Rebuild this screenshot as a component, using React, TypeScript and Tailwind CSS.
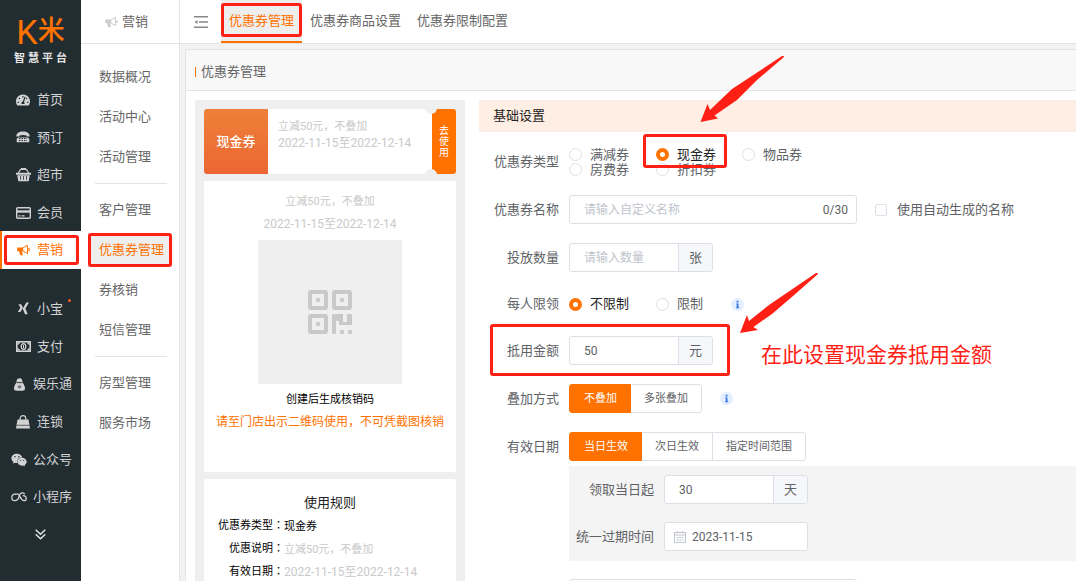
import React, { useState } from "react";
import { FaTachometerAlt, FaWeixin } from "react-icons/fa";

const PhoneIcon = () => (
  <svg width="14" height="12" viewBox="0 0 14 12" fill="currentColor">
    <path d="M.3 5.400C.3 2 3 .4 7 .4s6.700 1.600 6.700 5H10.500V4.600c-2-.7-5-.7-7 0v.8z" />
    <path d="M2.500 6.500h9l1.800 1.200v3.600H.7V7.700z" />
    <path d="M3 7.600h8M3 9.600h8" stroke="#222d32" strokeWidth="1" strokeDasharray="1.500 1" />
  </svg>
);

const BasketIcon = () => (
  <svg width="15" height="14" viewBox="0 0 15 14" fill="currentColor">
    <path d="M2.500 5.500C3 2.400 4.600.8 7.500.8s4.500 1.600 5 4.700" fill="none" stroke="currentColor" strokeWidth="1.200" />
    <path d="M5 0h5v2H5zM0 4.800h15v2H0zM1.300 7.200h12.400l-1 6.100H2.300z" />
    <path d="M4.500 8v3.800M7.500 8v3.800M10.500 8v3.800" stroke="#222d32" strokeWidth="0.800" />
  </svg>
);

const CardIcon = () => (
  <svg width="15" height="12" viewBox="0 0 15 12" fill="none" stroke="currentColor">
    <rect x="0.700" y="0.700" width="13.600" height="10.600" rx="1" strokeWidth="1.400" />
    <path d="M1 4.500h13" strokeWidth="2.400" />
    <path d="M2.500 8.800h2M5.500 8.800h3" strokeWidth="1.200" />
  </svg>
);

const HornIcon = () => (
  <svg width="13" height="12" viewBox="0 0 13 12">
    <path d="M.2 3.500h6v3.800H5l.8 4H3.200L2.200 7.300h-2z" fill="currentColor" />
    <path d="M6 3.800L10.500 1.200v8.400L6 7" fill="none" stroke="currentColor" />
    <path d="M12 4v3" stroke="currentColor" strokeWidth="1.200" />
  </svg>
);

const XiaobaoIcon = () => (
  <svg width="13" height="13" viewBox="0 0 13 13" fill="currentColor">
    <path d="M1.500 2.200h2.600L6 5.800 3.300 10H.8l2.600-4.200z" />
    <path d="M9.300.5H12L8.400 6.600l2.300 5.600H8L5.700 6.700z" />
  </svg>
);

const MoneyIcon = () => (
  <svg width="15" height="11" viewBox="0 0 15 11" fill="none" stroke="currentColor">
    <rect x="0.800" y="0.800" width="13.400" height="9.400" strokeWidth="1.600" />
    <path d="M1.500 3.500L3.500 1.500M13.500 3.500l-2-2M1.500 7.500l2 2M13.500 7.500l-2 2" strokeWidth="1.500" />
    <ellipse cx="7.500" cy="5.500" rx="2.300" ry="2.900" strokeWidth="1.300" />
    <path d="M7.500 3.900v3.200" />
  </svg>
);

const PenguinIcon = () => (
  <svg width="11" height="13" viewBox="0 0 11 13" fill="currentColor">
    <path d="M2.600 3.400C2.600 1.300 3.700.3 5.500.3s2.900 1 2.900 3.100c0 .9.200 1.300.6 1.800C10.300 7 11 8.900 11 10.600c0 1.500-1 2.200-2.500 2.200h-6C1 12.800 0 12.100 0 10.600 0 8.900.7 7 2 5.200c.4-.5.600-.9.600-1.800z" />
    <path d="M2.800 4.600h5.400" stroke="#222d32" strokeWidth="0.900" />
    <path d="M3.800 7.400h3.400v1.400c0 1-.7 1.600-1.700 1.600s-1.700-.6-1.700-1.600z" fill="#6d7679" />
  </svg>
);

const BagIcon = () => (
  <svg width="14" height="14" viewBox="0 0 14 14">
    <path d="M1.500 4.500h11L14 13.500H0z" fill="currentColor" />
    <path d="M4.200 6V3.500C4.200 1.700 5.400.7 7 .7s2.800 1 2.800 2.800V6" fill="none" stroke="currentColor" strokeWidth="1.200" />
    <path d="M.8 10.300h12.400" stroke="#222d32" strokeWidth="0.700" />
  </svg>
);

const MiniProgramIcon = () => (
  <svg width="16" height="10" viewBox="0 0 16 10" fill="none" stroke="currentColor" strokeWidth="1.300" strokeLinecap="round">
    <path d="M4.500 2.200C2 2 .8 3.600.8 5.400c0 2 1.400 3.200 3.200 3.200 2.700 0 3.500-2 4-3.600L8.600 3C9.500.7 12 .3 13.300 1.800" />
    <path d="M5 2.300C6.800 1 8 2.800 9 4.600c1 2 2 4 4 4 1.400 0 2.200-1 2.200-2.200 0-1.500-1.200-2.700-3-2.700" />
  </svg>
);

const DoubleDownIcon = () => (
  <svg width="11" height="11" viewBox="0 0 11 11" fill="none" stroke="currentColor" strokeWidth="1.500">
    <path d="M.7.8l4.800 4.400L10.300.8M.7 5.300l4.800 4.400 4.800-4.400" />
  </svg>
);

const FoldIcon = () => (
  <svg width="14" height="12" viewBox="0 0 14 12" fill="#888">
    <path d="M0 0h14v1.500H0zM5 5.200h9v1.500H5zM0 10.500h14V12H0zM.5 6L3.500 4v4z" />
  </svg>
);

const QrIcon = () => (
  <svg width="44" height="44" viewBox="0 0 44 44" fill="none" stroke="#c9c9c9" strokeWidth="4">
    <rect x="2" y="2" width="16" height="16" rx="1" />
    <rect x="26" y="2" width="16" height="16" rx="1" />
    <rect x="2" y="26" width="16" height="16" rx="1" />
    <g fill="#c9c9c9" stroke="none">
      <circle cx="10" cy="10" r="2.200" />
      <circle cx="34" cy="10" r="2.200" />
      <circle cx="10" cy="34" r="2.200" />
      <path d="M24 25a1 1 0 0 1 1-1h10v8h4v-8h4a1 1 0 0 1 1 1v10H31v-4h-3v13h-3a1 1 0 0 1-1-1z" />
      <rect x="32" y="40" width="4" height="4" rx="1" />
      <rect x="40" y="40" width="4" height="4" rx="1" />
    </g>
  </svg>
);

const CalendarIcon = () => (
  <svg width="12" height="12" viewBox="0 0 12 12" fill="none" stroke="#c0c4cc">
    <rect x="0.500" y="1.500" width="11" height="10" />
    <path d="M.5 4h11M3.500 0v2.500M8.500 0v2.500M2.500 6.500h7M2.500 9h7" />
    <path d="M5 6v4M7.500 6v4" stroke="#fff" strokeWidth="0.500" />
  </svg>
);

const InfoIcon = () => (
  <svg width="13" height="13" viewBox="0 0 13 13">
    <circle cx="6.500" cy="6.500" r="6.500" fill="#e3efff" />
    <path d="M5.600 2.800h1.900v1.600H5.600zM5 5.400h2.500v3.900h.7v1H5v-1h.7V6.300H5z" fill="#3a78f2" />
  </svg>
);

const mainNav = [
  { label: "首页", icon: <FaTachometerAlt size={14} /> },
  { label: "预订", icon: <PhoneIcon /> },
  { label: "超市", icon: <BasketIcon /> },
  { label: "会员", icon: <CardIcon /> },
  { label: "营销", icon: <HornIcon />, active: true },
];

const moreNav = [
  { label: "小宝", icon: <XiaobaoIcon />, dot: true },
  { label: "支付", icon: <MoneyIcon /> },
  { label: "娱乐通", icon: <PenguinIcon /> },
  { label: "连锁", icon: <BagIcon /> },
  { label: "公众号", icon: <FaWeixin size={16} /> },
  { label: "小程序", icon: <MiniProgramIcon /> },
];

const subNav = [
  ["数据概况", "活动中心", "活动管理"],
  ["客户管理", "优惠券管理", "券核销", "短信管理"],
  ["房型管理", "服务市场"],
];

const tabs = ["优惠券管理", "优惠券商品设置", "优惠券限制配置"];

const couponTypes = ["满减券", "现金券", "物品券", "房费券", "折扣券"];

// red frame drawn round a control
const Mark = ({ className }: { className: string }) => (
  <span
    className={`pointer-events-none absolute z-10 rounded-[3px] border-[3px] border-[#ff2015] ${className}`}
  />
);

type NavItemProps = {
  label: string;
  icon: React.ReactNode;
  active?: boolean;
  dot?: boolean;
};

const NavItem = ({ label, icon, active, dot }: NavItemProps) => (
  <a
    href="#"
    className={`relative flex flex-1 items-center gap-1.5 border-l-2 ${
      label.length > 2 ? "pl-[9px]" : "pl-[13px]"
    } ${
      active
        ? "border-[#ff7200] bg-white text-[#ff7200]"
        : "border-transparent text-[#d2d2d2]"
    }`}
  >
    <span className="flex w-4 shrink-0 justify-center">{icon}</span>
    <span className="relative">
      {label}
      {dot && (
        <i className="absolute -right-2 top-0 size-[3px] rounded-full bg-[#ff5722]" />
      )}
    </span>
    {active && <Mark className="inset-y-1 left-0.5 right-0.5" />}
  </a>
);

const Sidebar = () => (
  <aside className="w-[81px] shrink-0 bg-[#222d32]">
    <div className="flex h-[81px] flex-col items-center pt-[13px]">
      <div className="flex h-[37px] items-center text-[#ff7200]">
        <span className="text-[34px] leading-none">K</span>
        <span className="text-[27px] font-medium leading-none">米</span>
      </div>
      <div className="flex w-[53px] justify-between text-[11px] font-bold leading-[18px] text-[#e4e4e4]">
        <span>智</span>
        <span>慧</span>
        <span>平</span>
        <span>台</span>
      </div>
    </div>
    <nav className="flex h-[188px] flex-col">
      {mainNav.map((item) => (
        <NavItem key={item.label} {...item} />
      ))}
    </nav>
    <nav className="mt-[21px] flex h-[226px] flex-col">
      {moreNav.map((item) => (
        <NavItem key={item.label} {...item} />
      ))}
    </nav>
    <button
      type="button"
      aria-label="更多"
      className="flex h-9 w-full items-center justify-center text-[#e4e4e4]"
    >
      <DoubleDownIcon />
    </button>
  </aside>
);

const SubMenu = () => (
  <aside className="w-[99px] shrink-0 border-r border-[#e4e4e4] bg-white text-[#666]">
    <div className="flex h-11 items-center gap-1 border-b border-[#e4e4e4] pl-6">
      <span className="text-[#ccc]">
        <HornIcon />
      </span>
      营销
    </div>
    <nav className="pt-[13px]">
      {subNav.map((group, i) => (
        <div key={i}>
          {i > 0 && <hr className="mb-1.5 ml-3.5 mr-3 mt-1.5 border-[#e4e4e4]" />}
          {group.map((item) => (
            <div key={item} className="px-[7px] py-[3px]">
              <a
                href="#"
                className={`relative flex h-[34px] items-center whitespace-nowrap pl-[11px] ${
                  item === "优惠券管理" ? "bg-[#eee] text-[#ff7200]" : ""
                }`}
              >
                {item}
                {item === "优惠券管理" && <Mark className="inset-0" />}
              </a>
            </div>
          ))}
        </div>
      ))}
    </nav>
  </aside>
);

const TopBar = () => (
  <header className="flex h-11 items-center border-b border-[#e4e4e4] bg-white text-[#666]">
    <button type="button" aria-label="收起菜单" className="pl-3.5 pr-[13px]">
      <FoldIcon />
    </button>
    {tabs.map((tab, i) => (
      <a
        key={tab}
        href="#"
        className={`relative flex h-[43px] items-center border-b-2 px-2 ${
          i === 0
            ? "border-[#ff7200] bg-[#eee] text-[#ff7200]"
            : "border-transparent"
        }`}
      >
        {tab}
        {i === 0 && <Mark className="inset-x-0 bottom-1 top-[3px]" />}
      </a>
    ))}
  </header>
);

const Rule = ({ name, children }: { name: string; children: React.ReactNode }) => (
  <div className="flex h-[23px] items-center">
    <dt className="w-20 text-right text-[11px] text-black">
      {name}
      <span className="font-['Noto_Sans_CJK_TC']">：</span>
    </dt>
    <dd>{children}</dd>
  </div>
);

const Preview = () => (
  <section className="w-[270px] shrink-0 bg-[#efefef] p-[9px] text-[#c9c9c9]">
    <div className="relative flex h-[65px] overflow-hidden rounded-[3px] bg-white">
      <div className="flex w-16 items-center justify-center bg-linear-to-b from-[#ee8039] to-[#ec6633] font-medium text-white">
        现金券
      </div>
      <div className="flex-1 pl-2.5 pt-2.5 leading-4">
        <p className="text-[11px] leading-4">立减50元，不叠加</p>
        <p className="text-xs leading-4">2022-11-15至2022-12-14</p>
      </div>
      <div className="flex w-6 flex-col items-center justify-center bg-[#ff7200] text-[10px] leading-[11px] text-white">
        <span>去</span>
        <span>使</span>
        <span>用</span>
      </div>
      <i className="absolute -top-[7px] right-[19px] size-3 rounded-full bg-[#efefef]" />
      <i className="absolute -bottom-[7px] right-[19px] size-3 rounded-full bg-[#efefef]" />
    </div>

    <div className="mt-[7px] flex flex-col items-center bg-white pb-[38px] pt-2.5">
      <p className="text-[11px] leading-[22px]">立减50元，不叠加</p>
      <p className="text-xs leading-[22px]">2022-11-15至2022-12-14</p>
      <div className="mt-[5px] flex size-36 items-center justify-center bg-[#efefef]">
        <QrIcon />
      </div>
      <p className="mt-1.5 text-[11px] leading-5 text-black">创建后生成核销码</p>
      <p className="text-xs leading-6 text-[#ff7200]">
        请至门店出示二维码使用，不可凭截图核销
      </p>
    </div>

    <div className="mt-[7px] rounded-[3px] bg-white pb-6 pt-3">
      <h3 className="text-center leading-[23px] text-[#222]">使用规则</h3>
      <dl>
        <Rule name="优惠券类型">
          <span className="text-[11px] text-black">现金券</span>
        </Rule>
        <Rule name="优惠说明">
          <span className="text-[11px]">立减50元，不叠加</span>
        </Rule>
        <Rule name="有效日期">
          <span className="text-xs">2022-11-15至2022-12-14</span>
        </Rule>
      </dl>
    </div>
  </section>
);

type RadioProps = {
  name: string;
  label: string;
  checked: boolean;
  onChange: () => void;
  children?: React.ReactNode;
};

const Radio = ({ name, label, checked, onChange, children }: RadioProps) => (
  <label className={`relative flex items-center gap-2 ${checked ? "text-[#222]" : ""}`}>
    <input
      type="radio"
      name={name}
      checked={checked}
      onChange={onChange}
      className="size-[13px] appearance-none rounded-full border border-[#dcdfe6] bg-white checked:border-4 checked:border-[#ff7200]"
    />
    {label}
    {children}
  </label>
);

type NumberBoxProps = {
  id: string;
  unit: string;
  value?: string;
  placeholder?: string;
};

const NumberBox = ({ id, unit, value, placeholder }: NumberBoxProps) => (
  <div className="flex h-[29px] w-36 overflow-hidden rounded-[3px] border border-[#dcdfe6] bg-white">
    <input
      id={id}
      defaultValue={value}
      placeholder={placeholder}
      className="w-0 flex-1 px-3.5 text-xs outline-none placeholder:text-[#c0c4cc]"
    />
    <span className="flex w-[34px] items-center justify-center border-l border-[#dcdfe6] bg-[#f5f7fa]">
      {unit}
    </span>
  </div>
);

const ButtonGroup = ({ options }: { options: string[] }) => {
  const [current, setCurrent] = useState(options[0]);
  return (
    <div className="flex h-[29px] text-[11px]">
      {options.map((option) => (
        <button
          key={option}
          type="button"
          onClick={() => setCurrent(option)}
          className={`-ml-px border px-[13px] pt-0.5 first:ml-0 first:rounded-l-[3px] first:pl-3.5 last:rounded-r-[3px] ${
            option === current
              ? "z-[1] border-[#ff7200] bg-[#ff7200] text-white"
              : "border-[#dcdfe6] bg-white"
          }`}
        >
          {option}
        </button>
      ))}
    </div>
  );
};

const labelClass = "w-20 shrink-0 text-right";

const CouponForm = () => {
  const [type, setType] = useState("现金券");
  const [limit, setLimit] = useState("不限制");

  return (
    <form className="relative min-w-0 flex-1 text-[#606266]">
      <h2 className="mb-[15px] flex h-8 items-center bg-[#feeee3] pl-3.5 text-[#222]">
        基础设置
      </h2>

      <div className="mb-[18px] flex items-center gap-2.5">
        <span className={labelClass}>优惠券类型</span>
        <div className="grid grid-cols-[87px_86px_auto] leading-[15px]">
          {couponTypes.map((item) => (
            <Radio
              key={item}
              name="type"
              label={item}
              checked={type === item}
              onChange={() => setType(item)}
            >
              {item === "现金券" && (
                <Mark className="-left-[13px] -top-[13px] h-[34px] w-[84px]" />
              )}
            </Radio>
          ))}
        </div>
      </div>

      <div className="mb-[19px] flex items-center gap-2.5">
        <label htmlFor="name" className={labelClass}>
          优惠券名称
        </label>
        <div className="flex h-[29px] w-72 items-center rounded-[3px] border border-[#dcdfe6] bg-white pr-2 text-xs">
          <input
            id="name"
            maxLength={30}
            placeholder="请输入自定义名称"
            className="w-0 flex-1 pl-3.5 outline-none placeholder:text-[#c0c4cc]"
          />
          <span>0/30</span>
        </div>
        <label className="flex items-center gap-2.5 whitespace-nowrap pl-2">
          <input
            type="checkbox"
            className="size-3 appearance-none rounded-[2px] border border-[#dcdfe6] bg-white checked:bg-[#ff7200]"
          />
          使用自动生成的名称
        </label>
      </div>

      <div className="mb-[19px] flex items-center gap-2.5">
        <label htmlFor="count" className={labelClass}>
          投放数量
        </label>
        <NumberBox id="count" unit="张" placeholder="请输入数量" />
      </div>

      <div className="mb-[19px] flex h-[26px] items-center gap-2.5">
        <span className={labelClass}>每人限领</span>
        <div className="grid grid-cols-[87px_75px_auto] items-center">
          {["不限制", "限制"].map((item) => (
            <Radio
              key={item}
              name="limit"
              label={item}
              checked={limit === item}
              onChange={() => setLimit(item)}
            />
          ))}
          <InfoIcon />
        </div>
      </div>

      <div className="relative mb-[19px] flex items-center gap-2.5">
        <label htmlFor="amount" className={labelClass}>
          抵用金额
        </label>
        <NumberBox id="amount" unit="元" value="50" />
        <Mark className="-top-3 left-[11px] h-[52px] w-60" />
        <strong className="absolute left-[282px] top-1 whitespace-nowrap text-[21px] font-normal leading-[30px] text-[#ff2015]">
          在此设置现金券抵用金额
        </strong>
      </div>

      <div className="mb-[19px] flex items-center gap-2.5">
        <span className={labelClass}>叠加方式</span>
        <ButtonGroup options={["不叠加", "多张叠加"]} />
        <span className="pl-2">
          <InfoIcon />
        </span>
      </div>

      <div className="mb-[5px] flex items-center gap-2.5">
        <span className={labelClass}>有效日期</span>
        <ButtonGroup options={["当日生效", "次日生效", "指定时间范围"]} />
      </div>

      <div className="mb-[18px] ml-[90px] bg-[#f4f4f4] pb-2.5 pt-[9px]">
        <div className="mb-[18px] flex items-center gap-2.5">
          <label htmlFor="days" className="w-[85px] text-right">
            领取当日起
          </label>
          <NumberBox id="days" unit="天" value="30" />
        </div>
        <div className="flex items-center gap-2.5">
          <label htmlFor="expire" className="w-[85px] text-right">
            统一过期时间
          </label>
          <div className="flex h-[29px] w-36 items-center gap-1.5 rounded-[3px] border border-[#dcdfe6] bg-white pl-[9px]">
            <CalendarIcon />
            <input
              id="expire"
              defaultValue="2023-11-15"
              className="w-0 flex-1 text-xs outline-none"
            />
          </div>
        </div>
      </div>

      <textarea
        aria-label="使用说明"
        className="ml-[90px] block h-20 w-72 resize-none rounded-[3px] border border-[#dcdfe6]"
      />

      {/* arrows pointing at the coupon type and the amount */}
      <svg
        className="pointer-events-none absolute -top-[45px] left-[221px] z-20"
        width="85"
        height="68"
        fill="#ff2015"
      >
        <path d="M.5 67L7.500 49l2.500 6L32 34 82 1q2-.5 2 1L57 25 37 45 14.500 60.500l3.500 3z" />
      </svg>
      <svg
        className="pointer-events-none absolute left-[261px] top-[172px] z-20"
        width="80"
        height="62"
        fill="#ff2015"
      >
        <path d="M0 61L7 43l2 6 20-16L76 1q2-.5 2 1L53 24 32 42 13.500 55l4.500 3z" />
      </svg>
    </form>
  );
};

const App = () => {
  return (
    <div className="flex h-screen overflow-hidden bg-[#f2f2f2] font-['Roboto','Noto_Sans_CJK_SC',sans-serif] text-[13px]">
      <Sidebar />
      <SubMenu />
      <div className="flex min-w-0 flex-1 flex-col">
        <TopBar />
        <main className="ml-[5px] mt-[5px] min-h-0 flex-1 border-l border-t border-[#e4e4e4] bg-white">
          <h1 className="flex h-[41px] items-center gap-[5px] border-b border-[#e4e4e4] bg-[#f8f8f8] pl-[9px] pt-1 text-[#666]">
            <span className="h-2.5 w-px bg-[#ff7200]" />
            优惠券管理
          </h1>
          <div className="flex items-start gap-3.5 pl-[9px] pt-[9px]">
            <Preview />
            <CouponForm />
          </div>
        </main>
      </div>
    </div>
  );
};

export default App;
